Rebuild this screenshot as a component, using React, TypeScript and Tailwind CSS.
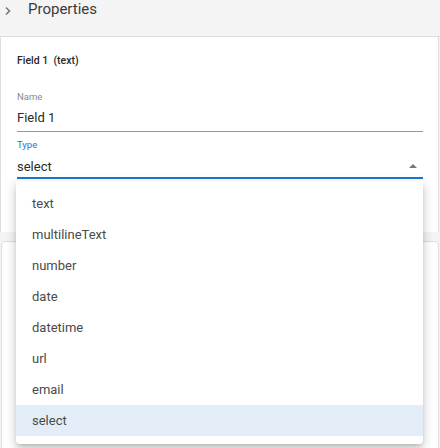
import React from 'react';

const typeOptions = ['text', 'multilineText', 'number', 'date', 'datetime', 'url', 'email', 'select'];

function Chevron() {
  return (
    <svg width="8" height="10" viewBox="0 0 8 10" className="text-[#777]">
      <path d="M2 1.5 L5.5 5 L2 8.5" fill="none" stroke="currentColor" strokeWidth="1.6" />
    </svg>
  );
}

export default function App() {
  const selected = 'select';

  return (
    <div
      className="relative w-[440px] h-[448px] overflow-hidden bg-[#f4f4f4]"
      style={{ fontFamily: 'Roboto, "Liberation Sans", sans-serif' }}
    >
      {/* Section header */}
      <div className="h-[37px] border-b border-[#dcdcdc] flex items-start">
        <div className="pl-[4px] pt-[6px]">
          <Chevron />
        </div>
        <span className="ml-[16px] text-[15px] leading-[18px] text-[#3a3a3a]">Properties</span>
      </div>

      {/* Field panel */}
      <div className="h-[195px] w-[439px] bg-white border-x border-[#dedede] pl-[16px] pr-[15px]">
        <div className="pt-[18px] text-[10.5px] leading-[12px] font-medium text-[#2a2a2a]">
          Field 1&nbsp; (text)
        </div>

        <div className="mt-[24px] border-b border-[#999]">
          <div className="text-[9.5px] leading-[11px] text-[#8a8a8a]">Name</div>
          <div className="mt-[8px] pb-[5px] text-[13px] leading-[16px] text-[#2a2a2a]">Field 1</div>
        </div>

        <div className="mt-[7px] border-b-2 border-[#1976d2]">
          <div className="text-[9.5px] leading-[11px] text-[#1976d2]">Type</div>
          <div className="mt-[9px] pb-[2px] flex items-center justify-between text-[13px] leading-[16px] text-[#2a2a2a]">
            <span>select</span>
            <svg width="8" height="4" viewBox="0 0 8 4" className="mr-[6px] mb-[3px]">
              <path d="M0 4 L4 0 L8 4 Z" fill="#777" />
            </svg>
          </div>
        </div>
      </div>

      {/* next card */}
      <div className="mt-[9px] ml-[1px] h-[300px] w-[438px] bg-white border border-[#dedede] rounded-t-[4px]" />

      {/* Open select menu */}
      <div className="absolute left-[16px] top-[181px] w-[407px] bg-white rounded-b-[4px] pt-[7px] pb-[8px] shadow-[0_3px_5px_-2px_rgba(0,0,0,0.2),0_6px_10px_1px_rgba(0,0,0,0.1),0_2px_12px_2px_rgba(0,0,0,0.08)]">
        {typeOptions.map((opt) => (
          <div
            key={opt}
            className={
              'h-[31px] pl-[16px] flex items-center text-[13px] text-[#4a4a4a] ' +
              (opt === selected ? 'bg-[#e3edf8]' : '')
            }
          >
            {opt}
          </div>
        ))}
      </div>
    </div>
  );
}
